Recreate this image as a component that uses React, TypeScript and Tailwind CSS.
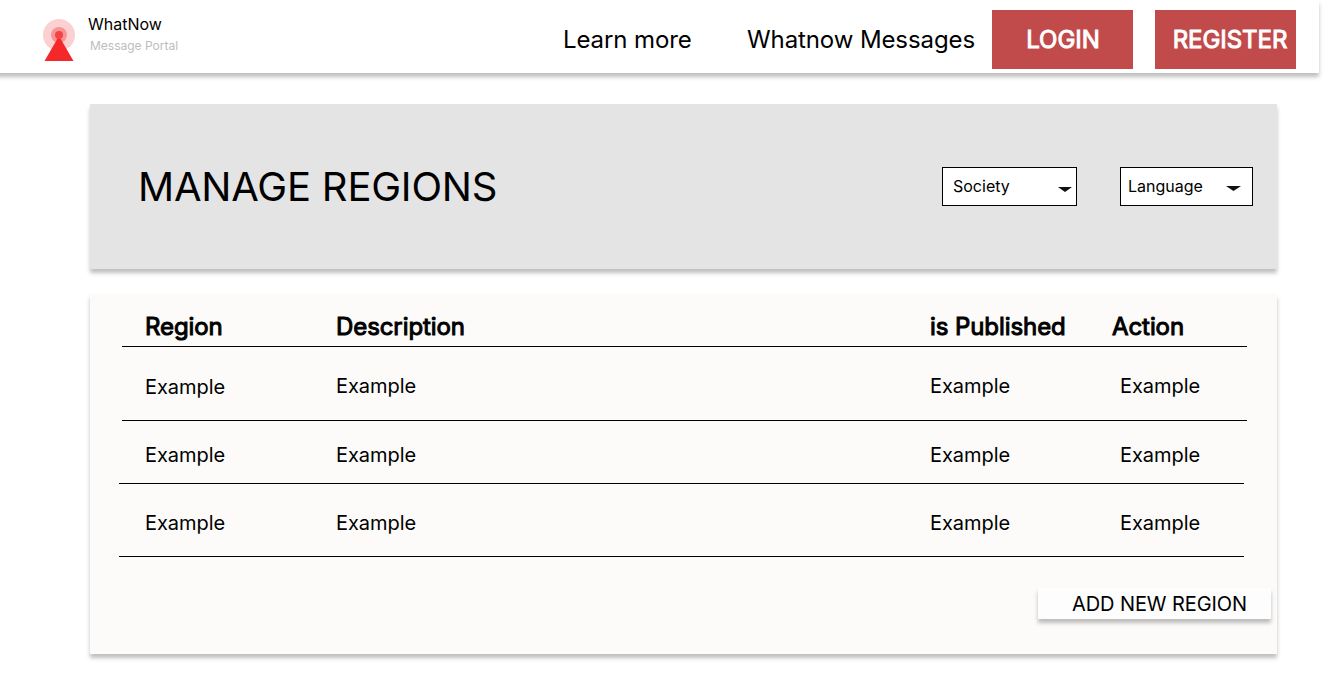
const rows = [
  { cls: 'h-[74px] ml-8 pt-[5px]', first: 'pt-[2px]' },
  { cls: 'h-[63px] ml-[29px] pl-[3px] pt-[6px]', first: '' },
  { cls: 'h-[73px] ml-[29px] pl-[3px] pt-[6px]', first: '' },
];

function Logo() {
  return (
    <svg className="ml-[50px] mt-[18px] h-[44px] w-[34px] shrink-0" viewBox="0 0 34 44">
      <circle cx="17" cy="17" r="16" fill="#fbd0d1" />
      <circle cx="17" cy="17" r="8" fill="#f79496" />
      <path d="M17 18L31.5 43H2.5Z" fill="#f42729" />
      <circle cx="17" cy="17" r="4" fill="#f54345" />
    </svg>
  );
}

function Caret({ className }: { className: string }) {
  return (
    <svg className={className} viewBox="0 0 14 5" preserveAspectRatio="none">
      <path d="M0 0H14L7 5Z" fill="#111" />
    </svg>
  );
}

export default function App() {
  return (
    <div className="h-[677px] w-[1324px] overflow-hidden bg-white font-['Inter',sans-serif] text-black">
      <header className="-ml-2 flex h-[73px] w-[1327px] items-start bg-white shadow-[0_4px_4px_rgba(0,0,0,0.25)]">
        <Logo />
        <div className="ml-3 w-[475px] pt-[14px]">
          <div className="text-[16px] leading-[20px]">WhatNow</div>
          <div className="ml-[2px] mt-1 text-[12px] leading-[15px] text-[#bdbdbd]">Message Portal</div>
        </div>
        <nav className="flex h-full w-[429px] whitespace-nowrap pt-[25px] text-[24px] leading-[29px] tracking-[-0.1px]">
          <a className="w-[184px]">Learn more</a>
          <a>Whatnow Messages</a>
        </nav>
        <button className="mt-[10px] h-[59px] w-[141px] bg-[#c14a4a] pl-px text-[24px] tracking-[-0.05px] text-white [-webkit-text-stroke:1px_white]">LOGIN</button>
        <button className="ml-[22px] mt-[10px] h-[59px] w-[141px] bg-[#c14a4a] pl-[9px] text-[24px] tracking-[-0.05px] text-white [-webkit-text-stroke:1px_white]">REGISTER</button>
      </header>
      <section className="ml-[90px] mt-[31px] flex h-[165px] w-[1187px] items-center bg-[#e4e4e4] pl-[48px] shadow-[0_4px_4px_rgba(0,0,0,0.25)]">
        <h1 className="w-[804px] text-[40px] leading-[48px] tracking-[-0.2px]">MANAGE REGIONS</h1>
        <div className="flex h-[39px] w-[135px] items-center border border-black bg-white pl-[10px] text-[16px]">
          <span className="w-[105px] pb-[2px]">Society</span>
          <Caret className="mt-[5px] h-[5px] w-[14px]" />
        </div>
        <div className="ml-[43px] flex h-[39px] w-[133px] items-center border border-black bg-white pl-[7px] text-[16px]">
          <span className="w-[98px] pb-[2px]">Language</span>
          <Caret className="mt-[3px] h-[5px] w-[15px]" />
        </div>
      </section>
      <main className="ml-[90px] mt-[25px] h-[360px] w-[1187px] bg-[#fcfbf9] shadow-[0_4px_4px_rgba(0,0,0,0.25)]">
        <div className="ml-8 flex h-[53px] w-[1125px] items-center border-b border-black pl-[23px] pt-[13px] text-[24px] tracking-[-0.08px] [-webkit-text-stroke:1px_black]">
          <span className="w-[191px]">Region</span>
          <span className="w-[594px]">Description</span>
          <span className="w-[182px]">is Published</span>
          <span>Action</span>
        </div>
        {rows.map((r, i) => (
          <div key={i} className={`flex w-[1125px] items-center border-b border-black text-[20px] tracking-[-0.06px] ${r.cls}`}>
            <span className={`ml-[23px] w-[191px] ${r.first}`}>Example</span>
            <span className="w-[594px]">Example</span>
            <span className="w-[190px]">Example</span>
            <span>Example</span>
          </div>
        ))}
        <button className="ml-[948px] mt-[31px] block h-[31px] w-[233px] bg-[#fdfdfd] pl-[10px] text-[20px] tracking-[-0.08px] shadow-[0_4px_4px_rgba(0,0,0,0.25)]">ADD NEW REGION</button>
      </main>
    </div>
  );
}
